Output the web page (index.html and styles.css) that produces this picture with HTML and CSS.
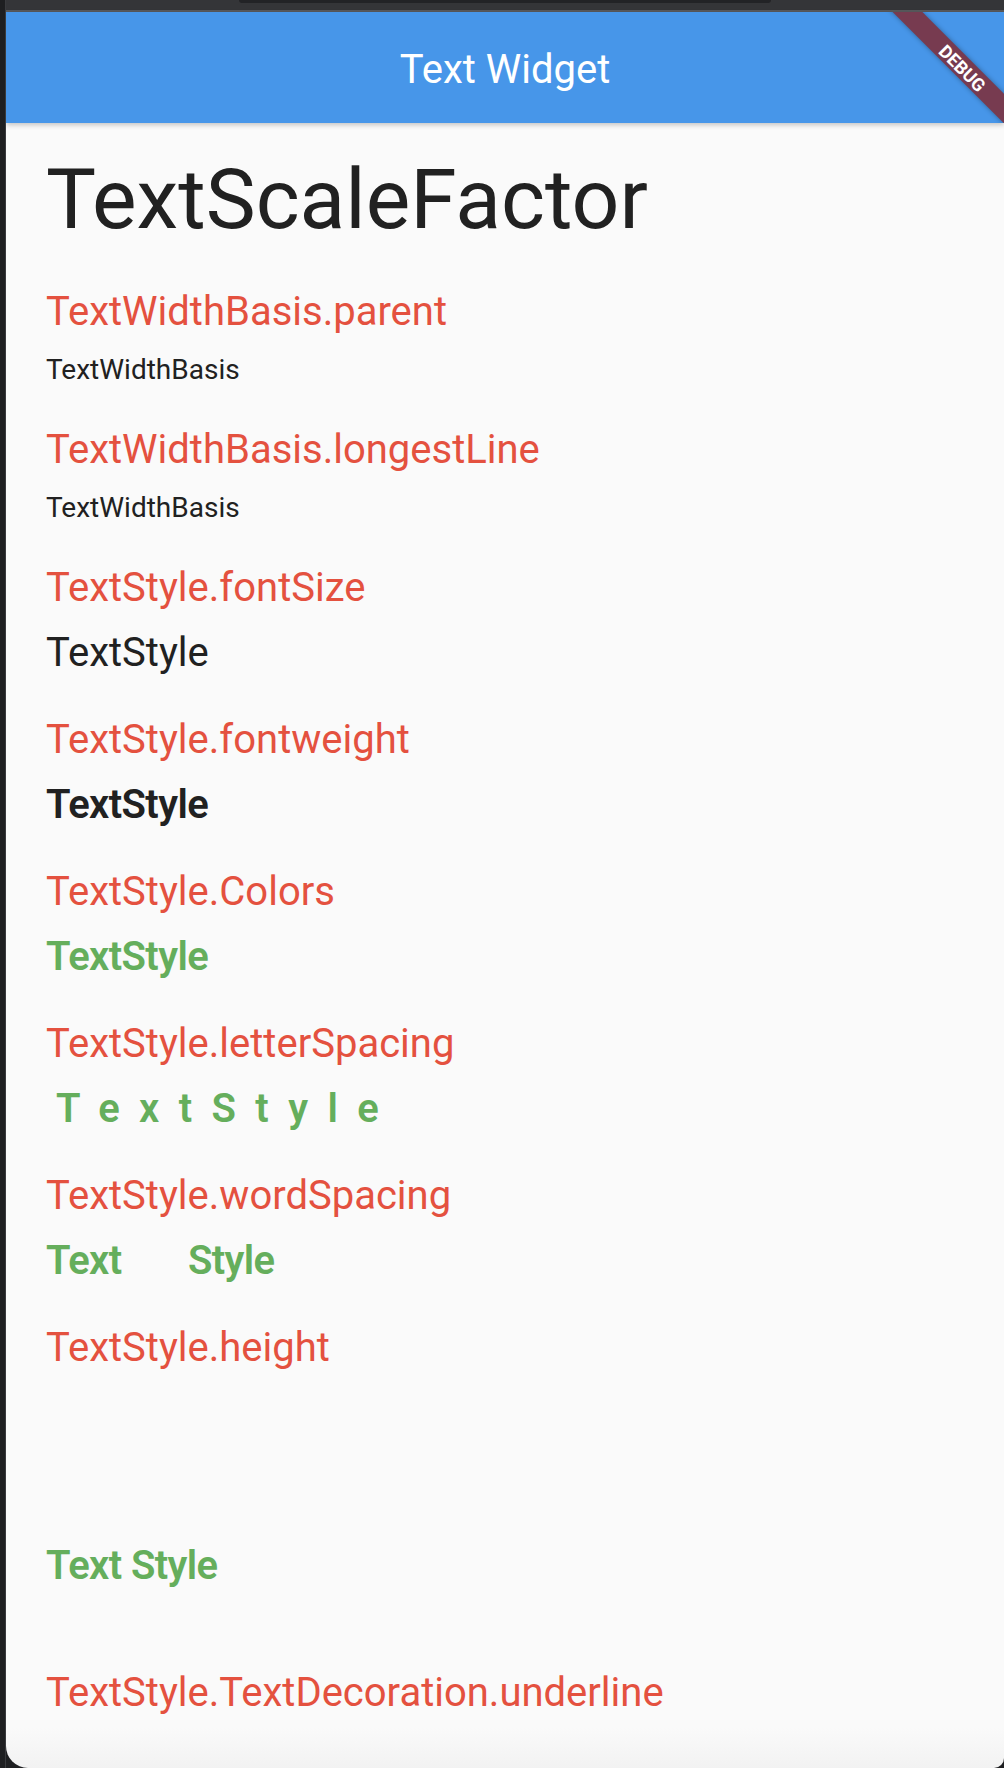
FILE: index.html
```html
<!DOCTYPE html>
<html lang="en">
<head>
<meta charset="utf-8">
<title>Text Widget</title>
<link rel="stylesheet" href="styles.css">
</head>
<body>
<div class="device">
  <div class="bezel"></div>
  <div class="screen">
    <div class="statusbar"><div class="notch"></div></div>
    <header class="appbar">
      <h1 class="appbar-title">Text Widget</h1>
      <div class="debug-ribbon"><span>DEBUG</span></div>
    </header>
    <main class="content">
      <div class="big-title">TextScaleFactor</div>

      <section class="demo">
        <div class="label">TextWidthBasis.parent</div>
        <div class="sample small">TextWidthBasis</div>
      </section>

      <section class="demo">
        <div class="label">TextWidthBasis.longestLine</div>
        <div class="sample small">TextWidthBasis</div>
      </section>

      <section class="demo">
        <div class="label">TextStyle.fontSize</div>
        <div class="sample">TextStyle</div>
      </section>

      <section class="demo">
        <div class="label">TextStyle.fontweight</div>
        <div class="sample bold">TextStyle</div>
      </section>

      <section class="demo">
        <div class="label">TextStyle.Colors</div>
        <div class="sample bold green">TextStyle</div>
      </section>

      <section class="demo">
        <div class="label">TextStyle.letterSpacing</div>
        <div class="sample bold green spaced">TextStyle</div>
      </section>

      <section class="demo">
        <div class="label">TextStyle.wordSpacing</div>
        <div class="sample bold green wordy">Text Style</div>
      </section>

      <section class="demo">
        <div class="label">TextStyle.height</div>
        <div class="sample bold green tall">Text Style</div>
      </section>

      <section class="demo">
        <div class="label">TextStyle.TextDecoration.underline</div>
      </section>
    </main>
  </div>
</div>
</body>
</html>
```

FILE: styles.css
```css
* { box-sizing: border-box; }

html, body {
  margin: 0;
  padding: 0;
  width: 1004px;
  height: 1768px;
  overflow: hidden;
  background: #1e1f21;
  font-family: Roboto, "Noto Sans", sans-serif;
}

.device {
  display: flex;
  width: 1004px;
  height: 1768px;
}

.bezel {
  width: 6px;
  flex: none;
  background: #1e1f21;
  border-right: 1px solid #3a3b3e;
}

.screen {
  flex: 1;
  display: flex;
  flex-direction: column;
  background: linear-gradient(#fafafa calc(100% - 40px), #f2f2f2);
  border-bottom-left-radius: 22px;
  border-bottom-right-radius: 10px;
  overflow: hidden;
}

.statusbar {
  height: 12px;
  flex: none;
  background: #343538;
  border-bottom: 2px solid #58595c;
  display: flex;
  justify-content: center;
}

.notch {
  width: 532px;
  height: 3px;
  background: #222326;
  border-radius: 0 0 3px 3px;
}

.appbar {
  position: relative;
  flex: none;
  height: 111px;
  background: #4796e9;
  display: flex;
  justify-content: center;
  align-items: center;
  overflow: hidden;
  box-shadow: 0 2px 5px rgba(0, 0, 0, 0.22);
  z-index: 1;
}

.appbar-title {
  margin: 0;
  padding-top: 4px;
  font-size: 40px;
  font-weight: 400;
  color: #ffffff;
  line-height: normal;
}

.debug-ribbon {
  position: absolute;
  left: 827px;
  top: 45px;
  width: 260px;
  height: 21px;
  background: #773b50;
  transform: rotate(45deg);
  display: flex;
  justify-content: center;
  align-items: center;
  box-shadow: 0 0 5px rgba(0, 0, 0, 0.35);
}

.debug-ribbon span {
  color: #ffffff;
  font-weight: 700;
  font-size: 18px;
  line-height: 1;
  padding-top: 2px;
}

.content {
  padding: 27px 0 0 40px;
  display: flex;
  flex-direction: column;
}

.big-title {
  font-size: 84px;
  color: #212121;
  line-height: normal;
  margin-bottom: -0.6px;
}

.demo {
  display: flex;
  flex-direction: column;
  align-items: flex-start;
  margin-top: 40px;
}

.label {
  font-size: 40px;
  line-height: normal;
  color: #e4513f;
}

.sample {
  margin-top: 18px;
  font-size: 40px;
  line-height: normal;
  color: #212121;
}

.sample.small {
  font-size: 28px;
}

.sample.bold {
  font-weight: 600;
  letter-spacing: -0.6px;
}

.sample.green {
  color: #65ae5c;
}

.sample.spaced {
  letter-spacing: 19.4px;
  padding-left: 10px;
}

.sample.wordy {
  word-spacing: 57px;
}

.sample.tall {
  padding-top: 153px;
  padding-bottom: 40px;
}
```
